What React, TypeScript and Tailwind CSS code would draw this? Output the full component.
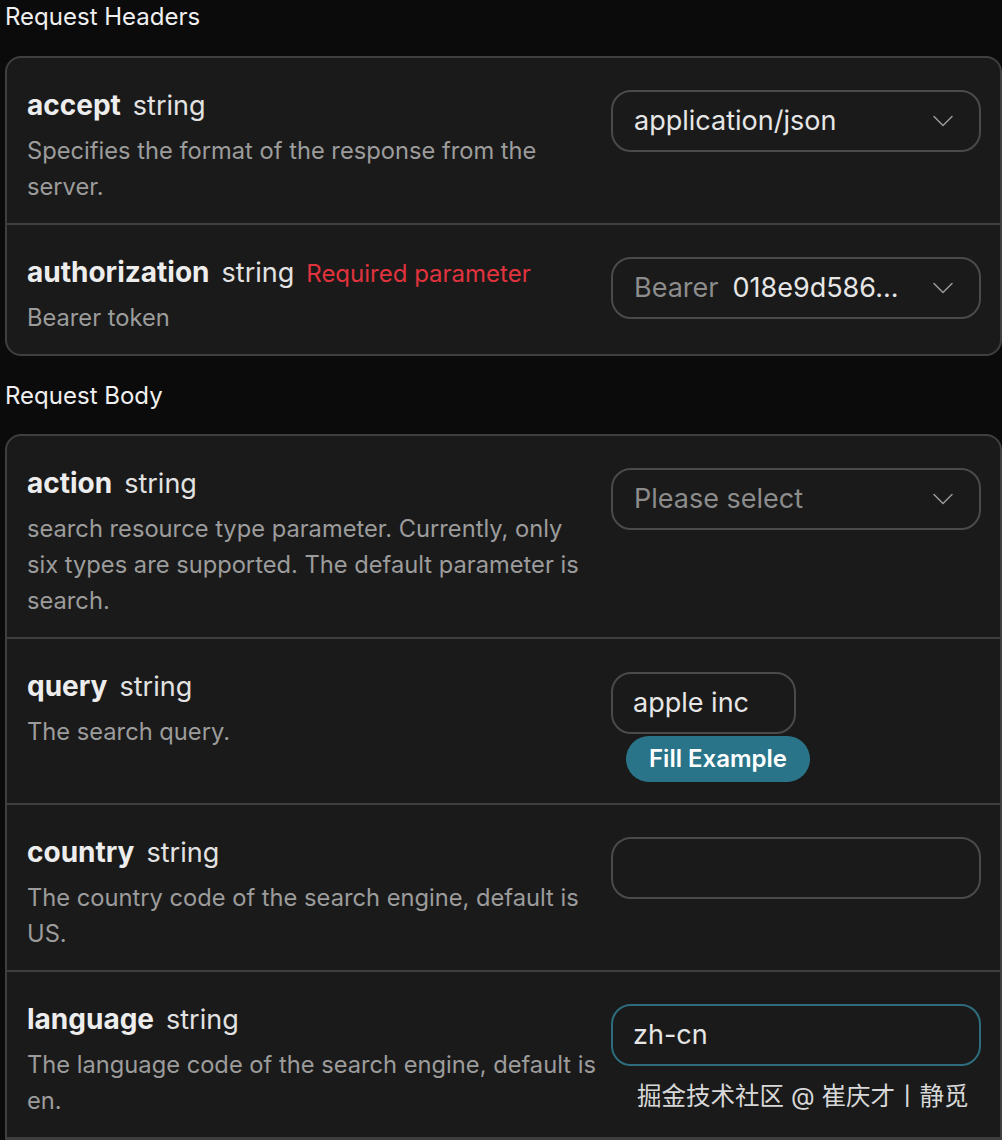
import { ChevronDown } from 'lucide-react';

type Param = {
    name: string;
    desc: React.ReactNode;
    required?: boolean;
    control: React.ReactNode;
};

function SelectBox({ children }: { children: React.ReactNode }) {
    return (
        <div className="h-[62px] w-full rounded-[20px] border-2 border-[#4a4a4a] flex items-center pl-[21px] pr-[18px]">
            <div className="flex-1 min-w-0 flex items-center gap-[14px] text-[27px] whitespace-nowrap">{children}</div>
            <ChevronDown className="w-[36px] h-[36px] text-[#9a9a9a]" strokeWidth={1} />
        </div>
    );
}

function Row({ p, last }: { p: Param; last?: boolean }) {
    return (
        <div className={`flex gap-[8px] pl-[20px] pr-[19px] pt-[31px] pb-[18px] ${last ? '' : 'border-b-2 border-[#3f3f3f]'}`}>
            <div className="flex-1 min-w-0">
                <div className="flex items-baseline gap-[12px] h-[32px] leading-[32px] whitespace-nowrap">
                    <span className="text-[28px] font-bold text-[#ededed]">{p.name}</span>
                    <span className="text-[27px] text-[#e2e2e2]">string</span>
                    {p.required && <span className="text-[24px] text-[#e0333d]">Required parameter</span>}
                </div>
                <p className="mt-[12px] text-[23.7px] leading-[36px] text-[#9c9c9c]">{p.desc}</p>
            </div>
            <div className="w-[370px] shrink-0 pt-[1px]">{p.control}</div>
        </div>
    );
}

export default function App() {
    const headers: Param[] = [
        {
            name: 'accept',
            desc: 'Specifies the format of the response from the server.',
            control: (
                <SelectBox>
                    <span className="text-[#e6e6e6]">application/json</span>
                </SelectBox>
            ),
        },
        {
            name: 'authorization',
            desc: 'Bearer token',
            required: true,
            control: (
                <SelectBox>
                    <span className="text-[#8c8c8c]">Bearer</span>
                    <span className="text-[#e6e6e6]">018e9d586...</span>
                </SelectBox>
            ),
        },
    ];

    const body: Param[] = [
        {
            name: 'action',
            desc: (
                <>
                    search resource type parameter. Currently, only
                    <br />
                    six types are supported. The default parameter is search.
                </>
            ),
            control: (
                <SelectBox>
                    <span className="text-[#8c8c8c]">Please select</span>
                </SelectBox>
            ),
        },
        {
            name: 'query',
            desc: 'The search query.',
            control: (
                <div className="flex flex-col items-start pt-[1px] pb-[3px]">
                    <div className="h-[62px] w-[185px] rounded-[20px] border-2 border-[#4a4a4a] flex items-center pl-[20px] text-[27px] text-[#e6e6e6]">
                        apple inc
                    </div>
                    <button className="mt-[2px] ml-[15px] h-[46px] w-[184px] rounded-full bg-[#2a7489] text-white text-[24px] font-semibold">
                        Fill Example
                    </button>
                </div>
            ),
        },
        {
            name: 'country',
            desc: 'The country code of the search engine, default is US.',
            control: <div className="h-[62px] w-full rounded-[20px] border-2 border-[#4a4a4a]" />,
        },
        {
            name: 'language',
            desc: 'The language code of the search engine, default is en.',
            control: (
                <div className="h-[62px] w-full rounded-[20px] border-2 border-[#2d6c7c] flex items-center pl-[20px] text-[27px] text-[#e6e6e6]">
                    zh-cn
                </div>
            ),
        },
    ];

    return (
        <div className="relative w-[1002px] h-[1140px] overflow-hidden bg-[#0b0b0b] pl-[5px] font-['Inter','Noto_Sans_CJK_SC',sans-serif]">
            <h2 className="mt-[3px] text-[24px] leading-[28px] text-[#f0f0f0] mb-[25px]">Request Headers</h2>
            <div className="w-[997px] rounded-[16px] border-2 border-[#3f3f3f] bg-[#1a1a1a]">
                {headers.map((p, i) => (
                    <Row key={p.name} p={p} last={i === headers.length - 1} />
                ))}
            </div>
            <h2 className="mt-[26px] text-[24px] leading-[28px] text-[#f0f0f0] mb-[24px]">Request Body</h2>
            <div className="w-[997px] rounded-t-[16px] border-2 border-[#3f3f3f] bg-[#1a1a1a]">
                {body.map((p) => (
                    <Row key={p.name} p={p} />
                ))}
            </div>
            {/* watermark */}
            <div className="absolute left-[637px] top-[1080px] text-[24.5px] leading-[32px] text-[#d8d8d8] whitespace-nowrap">
                掘金技术社区 @ 崔庆才丨静觅
            </div>
        </div>
    );
}
